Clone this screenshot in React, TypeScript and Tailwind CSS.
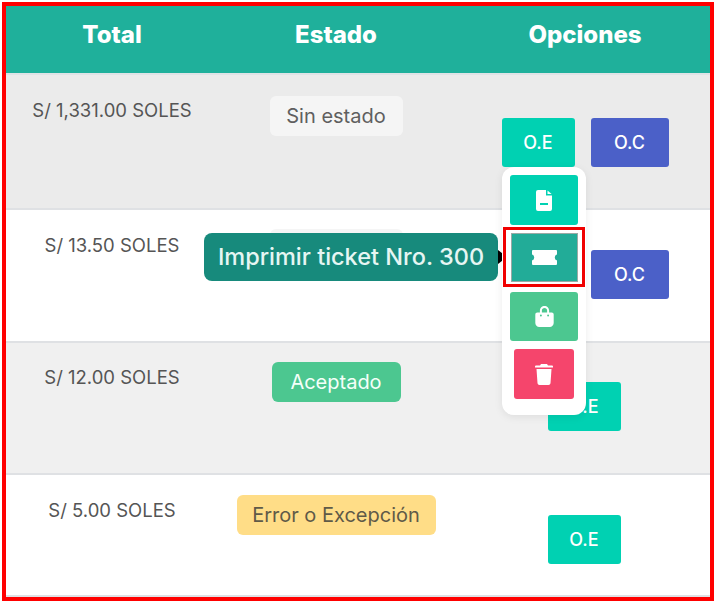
import { FaBagShopping } from "react-icons/fa6";

const rows = [
  {
    total: "S/ 1,331.00 SOLES",
    rowClass: "h-[135px] bg-[#ebebeb]",
    textPad: "pt-[21px]",
    badgePad: "pt-[21px]",
    btnPad: "pt-[43px] pl-[2px]",
    badge: "Sin estado",
    badgeClass: "w-[133px] bg-[#f5f5f5] text-[#5f5f5f]",
    twoButtons: true,
  },
  {
    total: "S/ 13.50 SOLES",
    rowClass: "h-[133px] bg-white",
    textPad: "pt-[21px]",
    badgePad: "pt-[19px]",
    btnPad: "pt-[40px] pl-[2px]",
    badge: "Sin estado",
    badgeClass: "w-[133px] bg-[#f5f5f5] text-[#5f5f5f]",
    twoButtons: true,
  },
  {
    total: "S/ 12.00 SOLES",
    rowClass: "h-[132px] bg-[#f0f0f0]",
    textPad: "pt-[20px]",
    badgePad: "pt-[19px]",
    btnPad: "pt-[39px]",
    badge: "Aceptado",
    badgeClass: "w-[129px] bg-[#4cc790] text-[#f4fff9]",
    twoButtons: false,
  },
  {
    total: "S/ 5.00 SOLES",
    rowClass: "h-[122px] bg-white",
    textPad: "pt-[21px]",
    badgePad: "pt-[20px]",
    btnPad: "pt-[40px]",
    badge: "Error o Excepción",
    badgeClass: "w-[199px] bg-[#ffdd87] text-[#5f5a48]",
    twoButtons: false,
  },
];

function DocIcon() {
  return (
    <svg width="16" height="21" viewBox="0 0 16 21">
      <path
        fill="#fff"
        fillRule="evenodd"
        d="M2 0h8v5.5h6V19a2 2 0 0 1-2 2H2a2 2 0 0 1-2-2V2a2 2 0 0 1 2-2Zm9.5 0.4L15.6 4h-4.1ZM4 13v2h8v-2Z"
      />
    </svg>
  );
}

function TicketIcon() {
  return (
    <svg width="25" height="15" viewBox="0 0 25 15">
      <path
        fill="#fff"
        d="M1 0h23a1 1 0 0 1 1 1v3.6a3 3 0 0 0 0 5.8V14a1 1 0 0 1-1 1H1a1 1 0 0 1-1-1v-3.6a3 3 0 0 0 0-5.8V1a1 1 0 0 1 1-1Z"
      />
    </svg>
  );
}

function TrashIcon() {
  return (
    <svg width="18" height="21" viewBox="0 0 18 21">
      <path
        fill="#fff"
        d="M6 0h6l1 1.5h4a1 1 0 0 1 1 1V3.5H0v-1a1 1 0 0 1 1-1h4ZM1.5 5h15l-1 14.2a2 2 0 0 1-2 1.8h-9a2 2 0 0 1-2-1.8Z"
      />
    </svg>
  );
}

export default function App() {
  return (
    <div className="bg-white p-[2px] w-[717px] h-[604px] font-['Inter',sans-serif]">
      <div className="border-4 border-[#ff0000] w-[712px] h-[599px]">
        <div className="relative w-[704px] h-[591px] overflow-hidden">
          <div className="grid grid-cols-[208px_244px_252px] h-[69px] bg-[#1fb09b] border-b-2 border-[#dfe3e6] text-white text-[24px] font-extrabold text-center pt-[13px] leading-[32px]">
            <div className="pl-[4px]">Total</div>
            <div>Estado</div>
            <div className="pl-[2px]">Opciones</div>
          </div>

          {rows.map((row, i) => (
            <div
              key={i}
              className={`grid grid-cols-[208px_244px_252px] border-b-2 border-[#dfe1e4] last:border-b-0 ${row.rowClass}`}
            >
              <div className={`pl-[4px] text-center text-[18.5px] leading-[28px] text-[#555555] ${row.textPad}`}>
                {row.total}
              </div>
              <div className={`flex justify-center items-start ${row.badgePad}`}>
                <span
                  className={`h-[40px] rounded-md flex items-center justify-center text-[20px] ${row.badgeClass}`}
                >
                  {row.badge}
                </span>
              </div>
              <div className={`flex justify-center items-start gap-[16px] ${row.btnPad}`}>
                <button className="w-[73px] h-[49px] rounded-[3px] bg-[#00d1b2] text-white text-[18px] font-medium">O.E</button>
                {row.twoButtons && (
                  <button className="w-[78px] h-[49px] rounded-[3px] bg-[#4b60c8] text-white text-[18px] font-medium">O.C</button>
                )}
              </div>
            </div>
          ))}

          {/* tooltip + acciones flotantes */}
          <div className="absolute left-[198px] top-[227px] w-[294px] h-[48px] rounded-lg bg-[#178a7c] text-[#e6f6f3] text-[23.5px] font-medium flex items-center justify-center whitespace-nowrap">
            Imprimir ticket Nro. 300
          </div>
          <div className="absolute left-[492px] top-[244px] w-0 h-0 border-y-[7px] border-y-transparent border-l-[9px] border-l-black" />

          <div className="absolute left-[496px] top-[161px] w-[84px] h-[248px] bg-white rounded-xl shadow-[0_2px_8px_rgba(0,0,0,0.08)] flex flex-col items-center pt-[8px]">
            <div className="w-[68px] h-[50px] rounded-[3px] bg-[#00d1b2] flex items-center justify-center">
              <DocIcon />
            </div>
            <div className="mt-[2px] w-[82px] h-[60px] border-[3px] border-[#f00000] flex items-center justify-center bg-white">
              <div className="w-[67px] h-[49px] bg-[#22ac98] border border-[#9aa9a5] flex items-center justify-center">
                <TicketIcon />
              </div>
            </div>
            <div className="mt-[5px] w-[68px] h-[49px] rounded-[3px] bg-[#4cc790] flex items-center justify-center">
              <FaBagShopping className="text-white text-[21px]" />
            </div>
            <div className="mt-[8px] w-[60px] h-[50px] rounded-[3px] bg-[#f5456c] flex items-center justify-center">
              <TrashIcon />
            </div>
          </div>
        </div>
      </div>
    </div>
  );
}
